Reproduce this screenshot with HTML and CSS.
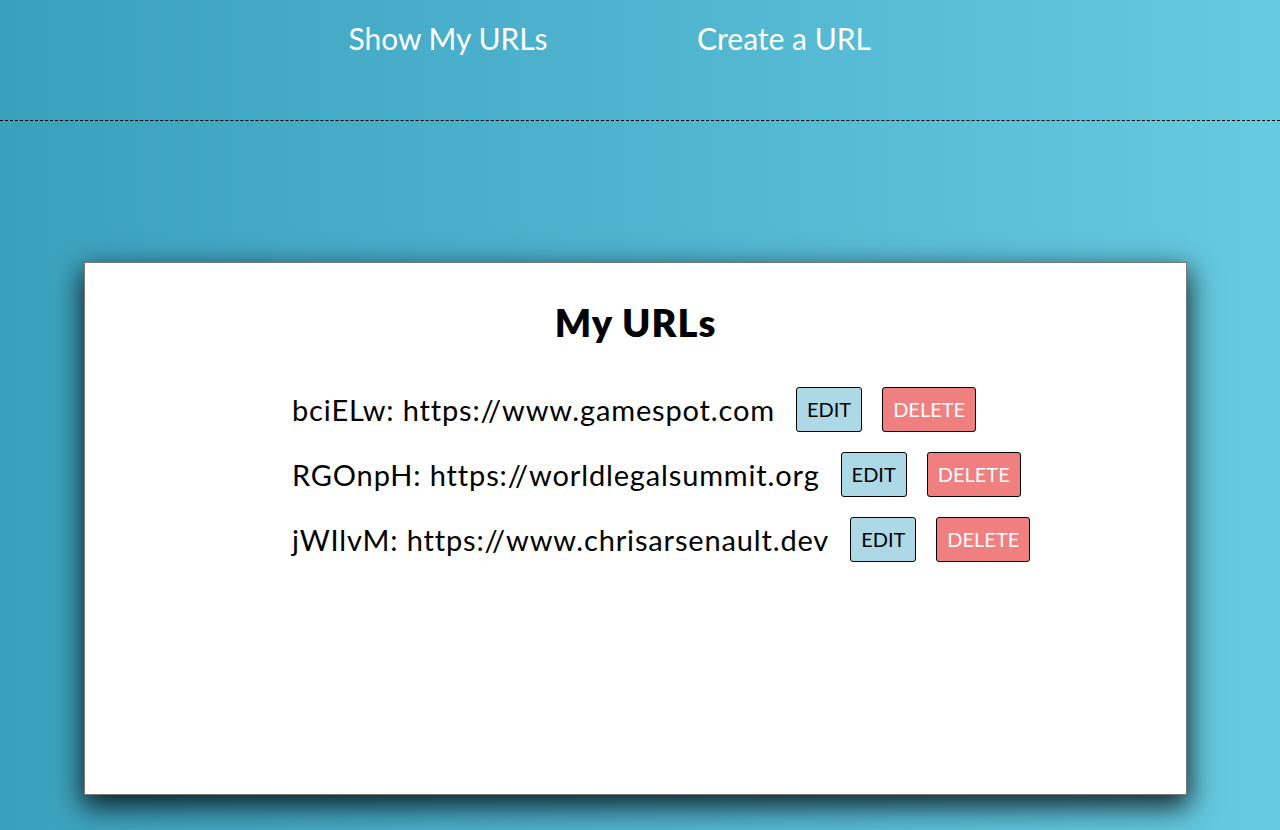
FILE: index.html
```html
<!DOCTYPE html>
<html lang="en">
<head>
<meta charset="utf-8">
<title>My URLs</title>
<link rel="stylesheet" href="styles.css">
</head>
<body>
<nav class="nav">
  <a class="nav-link" href="#">Show My URLs</a>
  <a class="nav-link" href="#">Create a URL</a>
</nav>
<main class="card">
  <h1 class="title">My URLs</h1>
  <ul class="url-list">
    <li class="url-row"><span class="url-text">bciELw: https://www.gamespot.com</span><button class="btn btn-edit">EDIT</button><button class="btn btn-delete">DELETE</button></li>
    <li class="url-row"><span class="url-text">RGOnpH: https://worldlegalsummit.org</span><button class="btn btn-edit">EDIT</button><button class="btn btn-delete">DELETE</button></li>
    <li class="url-row"><span class="url-text">jWIlvM: https://www.chrisarsenault.dev</span><button class="btn btn-edit">EDIT</button><button class="btn btn-delete">DELETE</button></li>
  </ul>
</main>
</body>
</html>
```
FILE: styles.css
```css
html, body {
  margin: 0;
  padding: 0;
  height: 100%;
}
body {
  font-family: Lato, "Noto Sans", sans-serif;
  background: linear-gradient(to right, #3aa1bd 0%, #4fb4cf 50%, #66cae0 100%);
  overflow: hidden;
}
.nav {
  display: flex;
  height: 120px;
  padding-left: 298px;
  gap: 36px;
  border-bottom: 1px dashed #000;
}
.nav-link {
  width: 300px;
  text-align: center;
  color: #fff;
  text-decoration: none;
  font-size: 30px;
  line-height: 36px;
  padding-top: 20px;
  height: 36px;
}
.card {
  box-sizing: border-box;
  margin: 141px 0 0 84px;
  width: 1103px;
  height: 533px;
  background: #fff;
  border: 1px solid #777;
  box-shadow: 0 10px 26px 2px rgba(0, 0, 0, 0.8);
  padding-top: 37px;
}
.title {
  margin: 0;
  text-align: center;
  font-size: 38px;
  line-height: 45px;
  font-weight: 800;
  letter-spacing: 1px;
  color: #000;
}
.url-list {
  list-style: none;
  margin: 42px 0 0 0;
  padding: 0 0 0 207px;
  display: flex;
  flex-direction: column;
  gap: 20px;
}
.url-row {
  display: flex;
  align-items: center;
  height: 45px;
}
.url-text {
  font-size: 29px;
  letter-spacing: 0.85px;
  color: #000;
  margin-right: 21px;
}
.btn {
  font-family: Lato, "Noto Sans", sans-serif;
  font-size: 20px;
  line-height: 23px;
  padding: 10px 10px;
  border: 1px solid #000;
  border-radius: 3px;
  height: 45px;
  box-sizing: border-box;
}
.btn-edit {
  background: #add8e6;
  color: #000;
  margin-right: 20px;
}
.btn-delete {
  background: #f08080;
  color: #fff;
}
```
